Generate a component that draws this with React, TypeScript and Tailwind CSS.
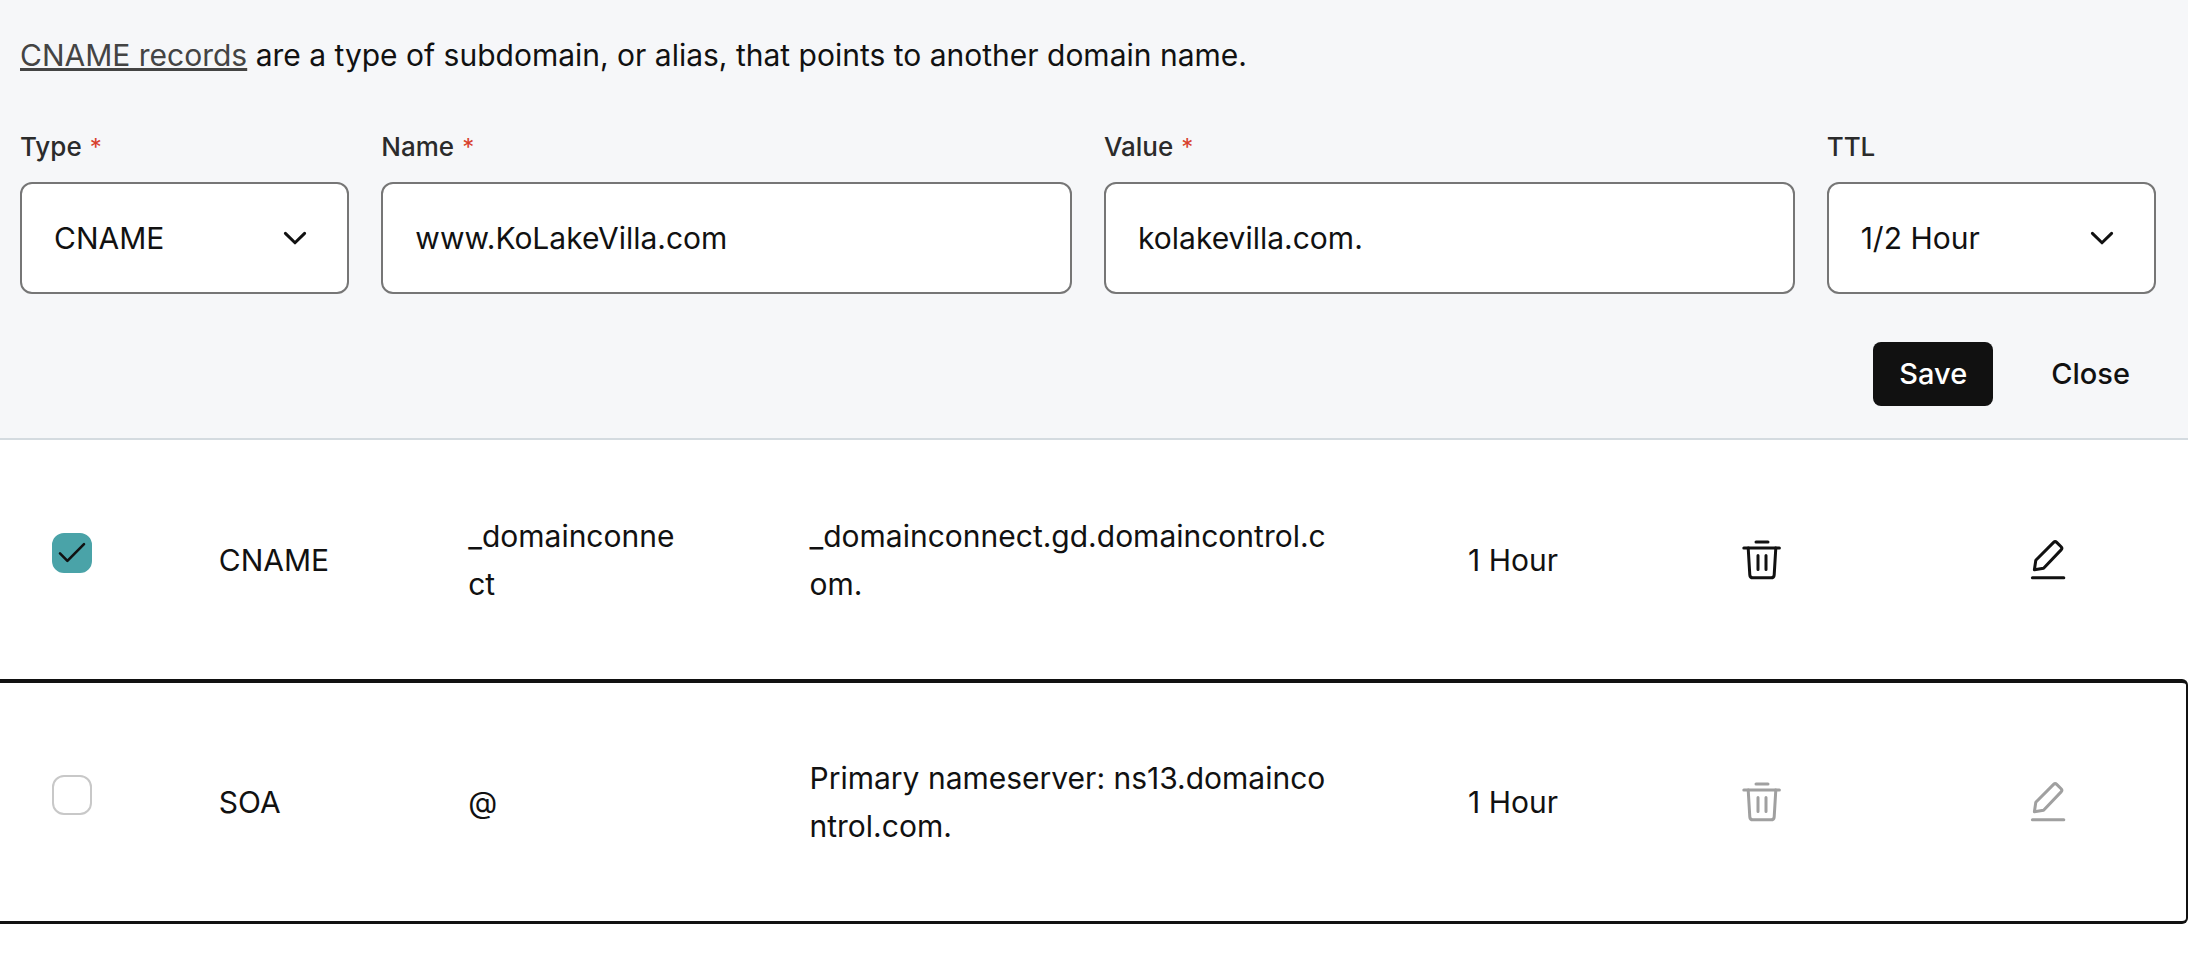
import { useState } from "react";
import type { ReactNode } from "react";

const control =
  "h-28 w-full rounded-xl border-2 border-[#767676] bg-white text-[30px] leading-[48px] text-[#111111] outline-none focus:border-[#111111]";

function Field({
  id,
  label,
  required,
  wide,
  children,
}: {
  id: string;
  label: string;
  required?: boolean;
  wide?: boolean;
  children: ReactNode;
}) {
  return (
    <div className={wide ? "col-span-2 flex flex-col gap-[15px]" : "flex flex-col gap-[15px]"}>
      <label htmlFor={id} className="text-[26px] leading-10 font-medium text-[#2b2b2b]">
        {label}
        {required && <span className="ml-2 text-[24px] leading-none font-normal text-[#d8402c]">*</span>}
      </label>
      {children}
    </div>
  );
}

function Select({ id, options }: { id: string; options: string[] }) {
  return (
    <div className="relative">
      <select id={id} className={`${control} appearance-none pr-20 pl-8`}>
        {options.map((option) => (
          <option key={option}>{option}</option>
        ))}
      </select>
      <svg
        viewBox="0 0 24 14"
        className="pointer-events-none absolute top-[49px] right-[42px] h-3.5 w-6"
        fill="none"
        stroke="#111111"
        strokeWidth="3"
        strokeLinecap="round"
        strokeLinejoin="round"
        aria-hidden="true"
      >
        <path d="M2.4 2.4 12 11.8 21.6 2.4" />
      </svg>
    </div>
  );
}

function TrashIcon() {
  return (
    <svg viewBox="0 0 40 40" className="size-10" fill="none" stroke="currentColor" strokeWidth="3" strokeLinecap="round" strokeLinejoin="round" aria-hidden="true">
      <path d="M14 1.9h12M1.8 8h35.6" />
      <path d="M6.2 8 7.8 34.8a3.2 3.2 0 0 0 3.2 3h18a3.2 3.2 0 0 0 3.2-3L33.8 8" />
      <path d="M16 15.6v14M24 15.6v14" />
    </svg>
  );
}

function EditIcon() {
  return (
    <svg viewBox="0 0 40 40" className="size-10" fill="none" stroke="currentColor" strokeWidth="3" strokeLinecap="round" strokeLinejoin="round" aria-hidden="true">
      <path d="M6.4 29.8 7.8 20.2 25.6 2.4a2.2 2.2 0 0 1 3.1 0l4.4 4.4a2.2 2.2 0 0 1 0 3.1L15.6 28.3Z" />
      <path d="M4.4 37.8h31.4" />
    </svg>
  );
}

type DnsRecord = { type: string; name: string; value: string; ttl: string; locked: boolean };

const records: DnsRecord[] = [
  { type: "CNAME", name: "_domainconnect", value: "_domainconnect.gd.domaincontrol.com.", ttl: "1 Hour", locked: false },
  { type: "SOA", name: "@", value: "Primary nameserver: ns13.domaincontrol.com.", ttl: "1 Hour", locked: true },
];

function RecordRow({ record }: { record: DnsRecord }) {
  const [checked, setChecked] = useState(!record.locked);
  const edge = record.locked ? "border-t-4 border-b-3 border-[#111111]" : "";
  const height = record.locked ? "h-[245px]" : "h-[239px]";
  const iconButton = "block text-[#111111] disabled:text-[#a0a0a0]";
  return (
    <tr className={height}>
      <td className={`${edge} pb-3.5 pl-[52px]`}>
        <span className="relative block size-10">
          <input
            type="checkbox"
            checked={checked}
            disabled={record.locked}
            onChange={(e) => setChecked(e.target.checked)}
            aria-label={`Select ${record.type} record ${record.name}`}
            className="peer block size-10 appearance-none rounded-xl border-2 border-[#c8c8c8] bg-white checked:border-[#4aa3a8] checked:bg-[#4aa3a8]"
          />
          <svg
            viewBox="0 0 40 40"
            className="pointer-events-none absolute inset-0 hidden size-10 peer-checked:block"
            fill="none"
            stroke="#111111"
            strokeWidth="2.6"
            strokeLinecap="round"
            strokeLinejoin="round"
            aria-hidden="true"
          >
            <path d="M8 20.4 15.4 27.8 32 11.2" />
          </svg>
        </span>
      </td>
      <td className={edge}>{record.type}</td>
      <td className={`${edge} pr-[120px] break-all`}>{record.name}</td>
      <td className={`${edge} pr-32 break-all`}>{record.value}</td>
      <td className={edge}>{record.ttl}</td>
      <td className={edge}>
        <button type="button" disabled={record.locked} aria-label="Delete record" className={iconButton}>
          <TrashIcon />
        </button>
      </td>
      <td className={record.locked ? `${edge} rounded-r-md border-r-2` : ""}>
        <button type="button" disabled={record.locked} aria-label="Edit record" className={iconButton}>
          <EditIcon />
        </button>
      </td>
    </tr>
  );
}

export default function App() {
  return (
    <main className="min-h-screen bg-white pr-3 font-['Inter',sans-serif] text-[30px] leading-[48px] text-[#111111]">
      <form
        onSubmit={(e) => e.preventDefault()}
        className="border-b-2 border-[#d4dbe0] bg-[#f6f7f9] pt-[31px] pr-8 pb-8 pl-5"
      >
        <p>
          <a href="#cname" className="text-[#444444] underline decoration-[3px] underline-offset-2">
            CNAME records
          </a>{" "}
          are a type of subdomain, or alias, that points to another domain name.
        </p>
        <div className="mt-12 grid grid-cols-6 gap-8">
          <Field id="type" label="Type" required>
            <Select id="type" options={["CNAME", "A", "MX", "TXT"]} />
          </Field>
          <Field id="name" label="Name" required wide>
            <input id="name" type="text" defaultValue="www.KoLakeVilla.com" className={`${control} px-8`} />
          </Field>
          <Field id="value" label="Value" required wide>
            <input id="value" type="text" defaultValue="kolakevilla.com." className={`${control} px-8`} />
          </Field>
          <Field id="ttl" label="TTL">
            <Select id="ttl" options={["1/2 Hour", "1 Hour", "1 Day"]} />
          </Field>
        </div>
        <div className="mt-12 flex justify-end gap-8">
          <button type="submit" className="h-16 rounded-lg bg-[#111111] px-[26px] text-[29px] font-medium text-white">
            Save
          </button>
          <button type="button" className="h-16 rounded-lg px-[26px] text-[29px] font-medium">
            Close
          </button>
        </div>
      </form>

      <table className="w-full table-fixed border-separate border-spacing-0 text-left">
        <colgroup>
          <col className="w-[10%]" />
          <col className="w-[11.4%]" />
          <col className="w-[15.6%]" />
          <col className="w-[30.1%]" />
          <col className="w-[12.5%]" />
          <col className="w-[13.1%]" />
          <col />
        </colgroup>
        <tbody>
          {records.map((record) => (
            <RecordRow key={record.type} record={record} />
          ))}
        </tbody>
      </table>
    </main>
  );
}
